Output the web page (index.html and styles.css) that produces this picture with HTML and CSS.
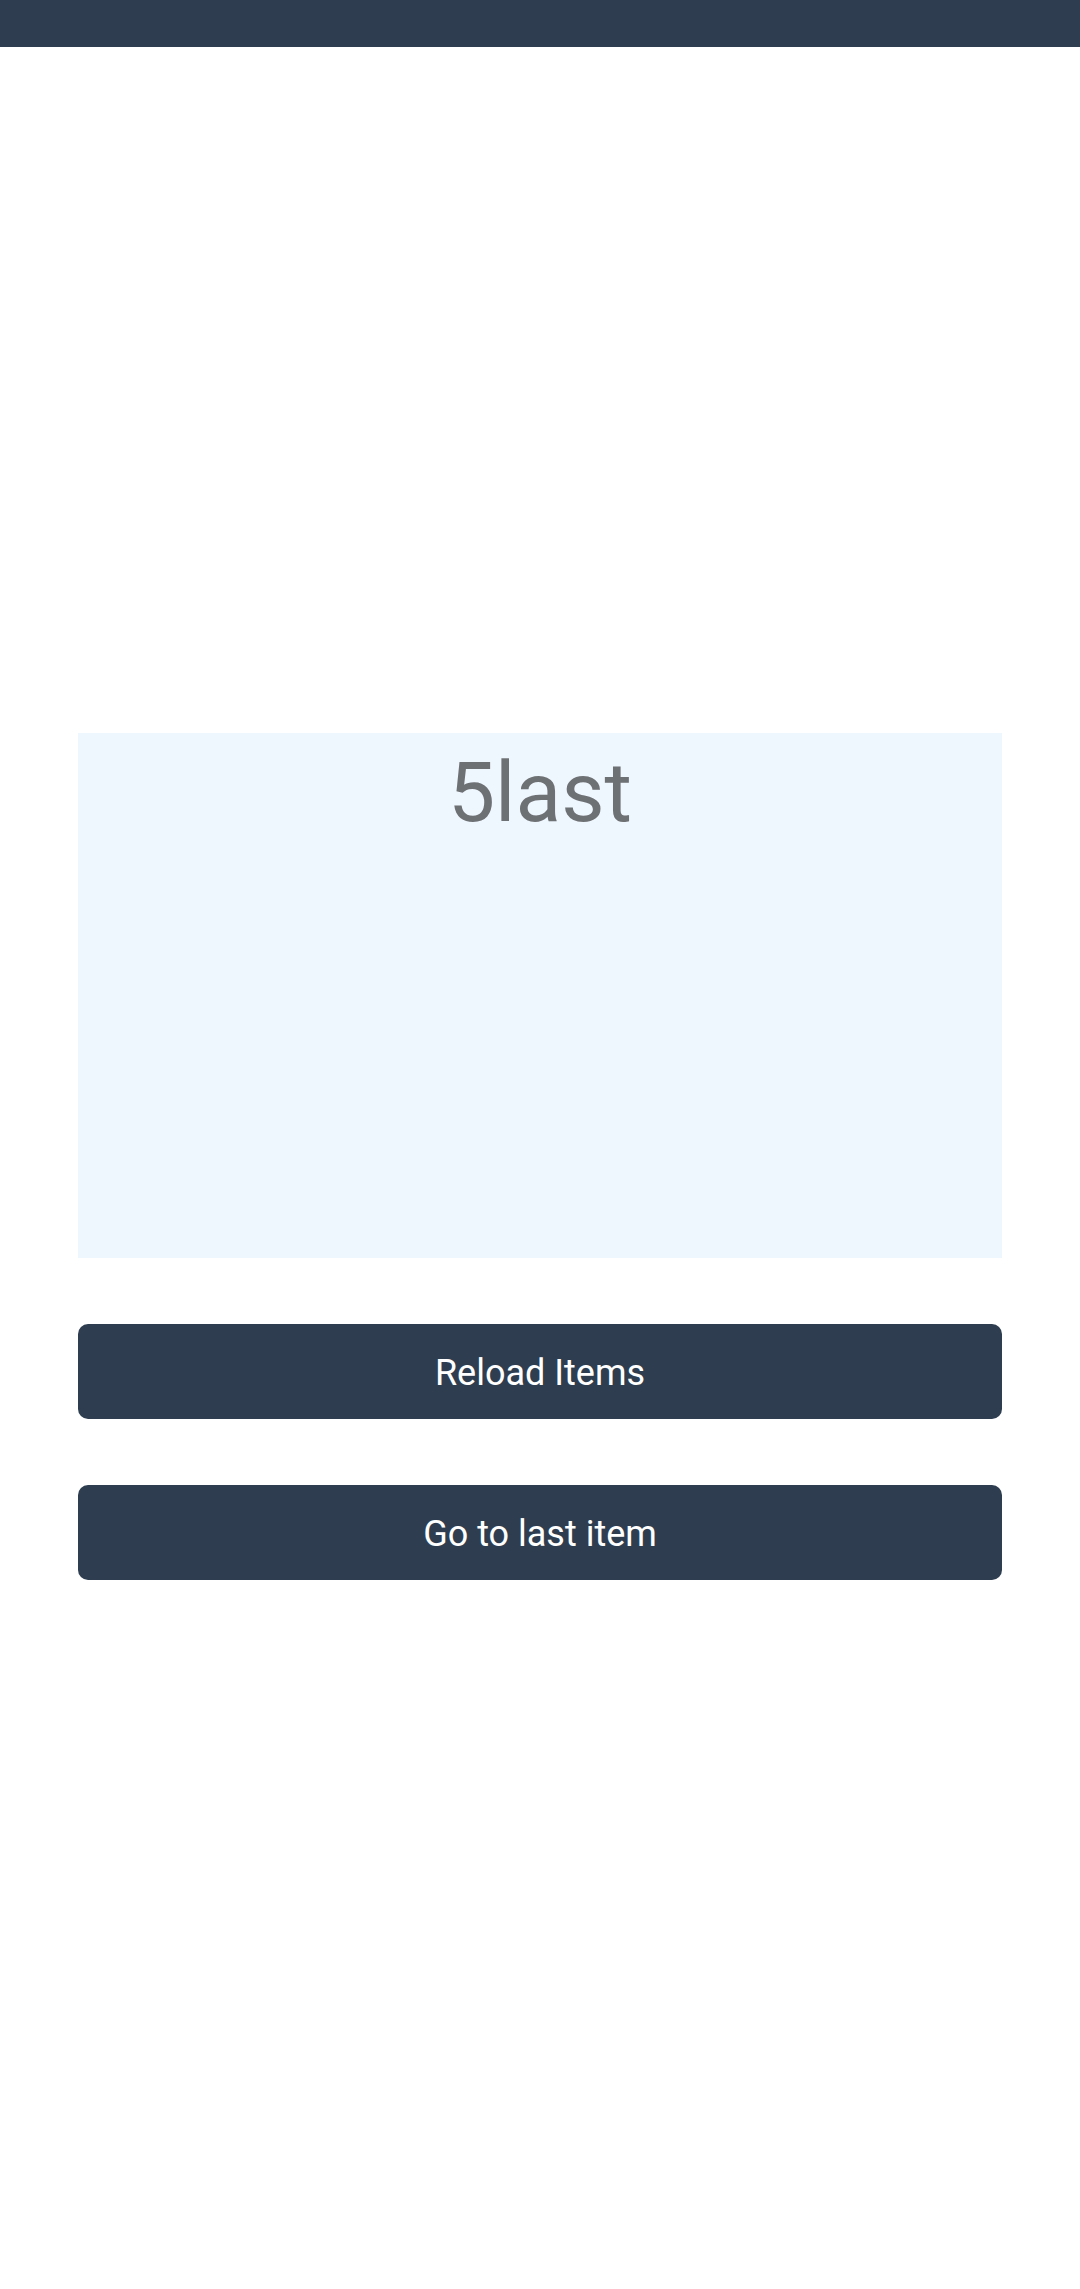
FILE: index.html
```html
<!DOCTYPE html>
<html>
<head>
<meta charset="utf-8">
<link rel="stylesheet" href="styles.css">
</head>
<body>
<header class="topbar"></header>
<main class="content">
  <section class="panel">
    <div class="panel-label">5last</div>
  </section>
  <button class="btn">Reload Items</button>
  <button class="btn">Go to last item</button>
</main>
</body>
</html>
```
FILE: styles.css
```css
html, body {
  margin: 0;
  padding: 0;
  background: #ffffff;
  font-family: Roboto, "Noto Sans", Arial, sans-serif;
}
.topbar {
  height: 47px;
  background: #2e3e50;
}
.content {
  display: flex;
  flex-direction: column;
  padding: 686px 78px 0 78px;
}
.panel {
  height: 525px;
  background: #eef6fe;
  display: flex;
  flex-direction: column;
  align-items: center;
}
.panel-label {
  margin-top: 11px;
  font-size: 84px;
  line-height: 1.172;
  color: #6e7174;
}
.btn {
  margin-top: 66px;
  height: 95px;
  border: none;
  border-radius: 10px;
  background: #2e3e50;
  color: #ffffff;
  font-family: Roboto, "Noto Sans", Arial, sans-serif;
  font-size: 36px;
  padding: 3px 0 0 0;
}
```
